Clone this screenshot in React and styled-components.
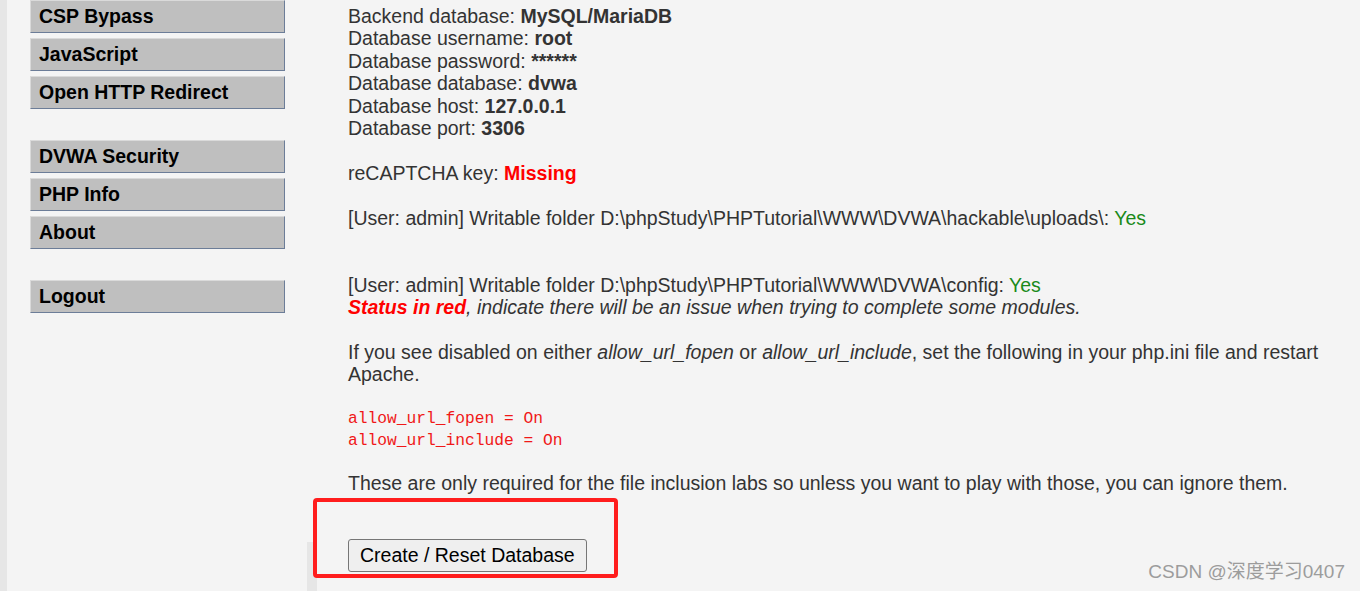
import React from 'react';
import styled, { createGlobalStyle } from 'styled-components';

const GlobalStyle = createGlobalStyle`
    html, body {
        margin: 0;
        padding: 0;
        background: #f4f4f4;
    }
    body {
        font-family: "Liberation Sans", Arial, sans-serif;
        color: #333;
    }
`;

const Page = styled.div`
    position: relative;
    display: flex;
    height: 591px;
    overflow: hidden;
    background: #f4f4f4;
`;

const Edge = styled.div`
    width: 7px;
    flex-shrink: 0;
    background: #e6e6e6;
`;

const Sidebar = styled.nav`
    width: 300px;
    flex-shrink: 0;
    padding: 0 0 0 23px;
    box-sizing: border-box;
`;

const MenuGroup = styled.ul`
    list-style: none;
    margin: 0 0 31px 0;
    padding: 0;
    display: flex;
    flex-direction: column;
    gap: 5px;
`;

const MenuItem = styled.li`
    width: 255px;
    height: 33px;
    box-sizing: border-box;
    display: flex;
    align-items: center;
    padding: 0 0 0 8px;
    background: #bfbfbf;
    border-top: 1px solid #dadada;
    border-left: 1px solid #dadada;
    border-right: 1px solid #6c7d98;
    border-bottom: 1px solid #6c7d98;
    font-size: 19.5px;
    font-weight: bold;
    color: #000;
`;

const Gutter = styled.div`
    width: 10px;
    flex-shrink: 0;
    display: flex;
    flex-direction: column;
    justify-content: flex-end;
`;

const GutterFoot = styled.div`
    height: 49px;
    background: #e6e6e6;
`;

const Main = styled.main`
    flex: 1;
    padding: 5px 15px 0 31px;
    font-size: 19.5px;
    line-height: 22.4px;
    color: #333;
`;

const Para = styled.p`
    margin: 0 0 ${(p) => (p.$gap || 1) * 22.4}px 0;
`;

const Value = styled.b`
    color: ${(p) => p.$color || '#333'};
`;

const Ok = styled.span`
    color: #1a8a1a;
`;

const Note = styled.em`
    font-style: italic;
`;

const Code = styled.pre`
    margin: 0 0 20px 0;
    font-family: "Liberation Mono", "Courier New", monospace;
    font-size: 16.25px;
    line-height: 22px;
    color: #f01818;
`;

const Button = styled.button`
    display: block;
    font-family: "Liberation Sans", Arial, sans-serif;
    font-size: 19.5px;
    line-height: 22.4px;
    color: #000;
    background: #efefef;
    border: 1px solid #767676;
    border-radius: 3px;
    padding: 4px 11px 4px;
    margin-top: 0;
`;

const Highlight = styled.div`
    position: absolute;
    left: 313px;
    top: 498px;
    width: 305px;
    height: 80px;
    box-sizing: border-box;
    border: 4.5px solid #ff1d1d;
    border-radius: 4px;
    pointer-events: none;
`;

const Watermark = styled.div`
    position: absolute;
    right: 15px;
    bottom: 8px;
    font-family: "Liberation Sans", "Noto Sans CJK SC", sans-serif;
    font-size: 19px;
    color: #9c9c9c;
`;

const groups = [
    ['CSP Bypass', 'JavaScript', 'Open HTTP Redirect'],
    ['DVWA Security', 'PHP Info', 'About'],
    ['Logout'],
];

const App = () => {
    return (
        <>
            <GlobalStyle />
            <Page>
                <Edge />
                <Sidebar>
                    {groups.map((g, i) => (
                        <MenuGroup key={i}>
                            {g.map((label) => (
                                <MenuItem key={label}>{label}</MenuItem>
                            ))}
                        </MenuGroup>
                    ))}
                </Sidebar>
                <Gutter>
                    <GutterFoot />
                </Gutter>
                <Main>
                    <Para>
                        Backend database: <Value>MySQL/MariaDB</Value><br />
                        Database username: <Value>root</Value><br />
                        Database password: <Value>******</Value><br />
                        Database database: <Value>dvwa</Value><br />
                        Database host: <Value>127.0.0.1</Value><br />
                        Database port: <Value>3306</Value>
                    </Para>
                    <Para>
                        reCAPTCHA key: <Value $color="#ff0000">Missing</Value>
                    </Para>
                    <Para $gap={2}>
                        [User: admin] Writable folder D:\phpStudy\PHPTutorial\WWW\DVWA\hackable\uploads\: <Ok>Yes</Ok>
                    </Para>
                    <Para>
                        [User: admin] Writable folder D:\phpStudy\PHPTutorial\WWW\DVWA\config: <Ok>Yes</Ok><br />
                        <Note><Value $color="#ff0000">Status in red</Value>, indicate there will be an issue when trying to complete some modules.</Note>
                    </Para>
                    <Para>
                        If you see disabled on either <Note>allow_url_fopen</Note> or <Note>allow_url_include</Note>, set the following in your php.ini file and restart Apache.
                    </Para>
                    <Code>{'allow_url_fopen = On\nallow_url_include = On'}</Code>
                    <Para $gap={2}>
                        These are only required for the file inclusion labs so unless you want to play with those, you can ignore them.
                    </Para>
                    <Button type="button">Create / Reset Database</Button>
                </Main>
                <Highlight />
                <Watermark>CSDN @深度学习0407</Watermark>
            </Page>
        </>
    );
};

export default App;
